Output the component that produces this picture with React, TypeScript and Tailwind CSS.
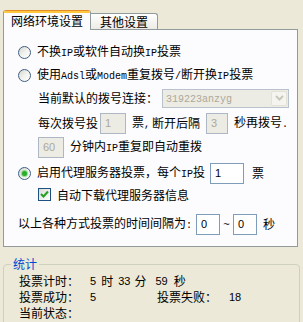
import React from "react";

const L = ({ children }: { children: React.ReactNode }) => (
  <span className="font-['Liberation_Mono',monospace] text-[10px]">{children}</span>
);

const Radio = ({ checked }: { checked?: boolean }) => (
  <span className="w-[13px] h-[13px] rounded-full border border-[#3D5F86] bg-gradient-to-br from-[#D6D5CE] via-[#F2F2EE] to-white flex items-center justify-center shrink-0">
    {checked && <span className="w-[5px] h-[5px] rounded-full bg-[#2AAE2A] shadow-[0_0_1px_1px_#8CD88C]" />}
  </span>
);

const Check = () => (
  <span className="w-[13px] h-[13px] border border-[#1C5180] bg-gradient-to-br from-[#DCDCD6] to-white flex items-center justify-center shrink-0">
    <svg width="9" height="9" viewBox="0 0 9 9">
      <path d="M1 4 L3.5 6.5 L8 1.5" stroke="#21A121" strokeWidth="2" fill="none" />
    </svg>
  </span>
);

const Box = ({ w, v, disabled }: { w: string; v: string; disabled?: boolean }) => (
  <div
    className={
      w +
      " h-[21px] border pl-[4px] pt-[2px] text-[11px] leading-[14px] font-['Liberation_Sans',sans-serif] shrink-0 " +
      (disabled
        ? "border-[#AEB8C4] bg-[#EDECE4] text-[#ACA899]"
        : "border-[#7F9DB9] bg-white text-black")
    }
  >
    {v}
  </div>
);

export default function App() {
  return (
    <div className="w-[303px] h-[322px] bg-[#ECE9D8] overflow-hidden font-['Noto_Sans_CJK_SC','Noto_Sans_CJK_SC',sans-serif] text-[12px] leading-[14px] text-black">
      {/* Tabs */}
      <div className="flex items-end h-[29px] pl-[3px]">
        <div className="relative z-10 -mb-px w-[88px] h-[20px] flex flex-col border-x border-[#919B9C] bg-[#FCFCFE] rounded-t-[3px] overflow-hidden">
          <div className="h-[1px] bg-[#E68B2C]" />
          <div className="h-[2px] bg-[#FFC73C]" />
          <div className="h-[15px] flex items-center justify-center">网络环境设置</div>
        </div>
        <div className="w-[67px] h-[16px] flex items-center justify-center pt-[1px] border-t border-r border-[#919B9C] rounded-tr-[3px] bg-gradient-to-b from-white to-[#ECEBE6]">
          其他设置
        </div>
      </div>

      {/* Panel */}
      <div className="ml-[3px] w-[295px] h-[218px] border border-[#919B9C] bg-[#FCFCFE] pt-[11px] pl-[14px] flex flex-col">
        <div className="h-[22px] flex items-center">
          <Radio />
          <span className="ml-[6px]">
            不换<L>IP</L>或软件自动换<L>IP</L>投票
          </span>
        </div>
        <div className="h-[24px] flex items-center">
          <Radio />
          <span className="ml-[6px]">
            使用<L>Adsl</L>或<L>Modem</L>重复拨号<L>/</L>断开换<L>IP</L>投票
          </span>
        </div>
        <div className="h-[22px] flex items-center pl-[20px]">
          <span className="w-[124px]">当前默认的拨号连接：</span>
          <div className="w-[127px] h-[19px] border border-[#B7C2CC] bg-[#EDECE4] flex items-center">
            <span className="flex-1 pl-[3px] text-[#ACA899]">
              <L>319223anzyg</L>
            </span>
            <span className="w-[16px] h-[15px] mr-[1px] rounded-[2px] border border-[#E4E2D8] bg-[#F5F4EF] flex items-center justify-center">
              <svg width="9" height="6" viewBox="0 0 9 6">
                <path d="M1 1 L4.5 4.5 L8 1" stroke="#C9C7BA" strokeWidth="2" fill="none" />
              </svg>
            </span>
          </div>
        </div>
        <div className="h-[28px] flex items-center pl-[20px]">
          <span className="w-[62px]">每次拨号投</span>
          <Box w="w-[26px]" v="1" disabled />
          <span className="ml-[6px]">
            票<L>,</L>
          </span>
          <span className="ml-[2px] w-[54px]">断开后隔</span>
          <Box w="w-[22px]" v="3" disabled />
          <span className="ml-[6px]">
            秒再拨号<L>.</L>
          </span>
        </div>
        <div className="h-[21px] flex items-center pl-[20px]">
          <Box w="w-[26px]" v="60" disabled />
          <span className="ml-[6px]">
            分钟内<L>IP</L>重复即自动重拨
          </span>
        </div>
        <div className="h-[30px] flex items-center">
          <Radio checked />
          <span className="ml-[6px] w-[173px]">
            启用代理服务器投票，每个<L>IP</L>投
          </span>
          <Box w="w-[34px]" v="1" />
          <span className="ml-[8px]">票</span>
        </div>
        <div className="h-[13px] flex items-center pl-[20px]">
          <Check />
          <span className="ml-[6px]">自动下载代理服务器信息</span>
        </div>
        <div className="mt-[12px] h-[22px] flex items-center">
          <span className="w-[178px]">
            以上各种方式投票的时间间隔为<L>:</L>
          </span>
          <Box w="w-[24px]" v="0" />
          <span className="w-[13px] text-center text-[11px] font-['Liberation_Sans',sans-serif]">~</span>
          <Box w="w-[24px]" v="0" />
          <span className="ml-[6px]">秒</span>
        </div>
      </div>

      {/* Stats group */}
      <div className="relative mt-[17px] ml-[3px] w-[297px] h-[80px] border border-[#D0D0BF] rounded-[4px] pt-[8px] pl-[15px]">
        <span className="absolute left-[7px] -top-[8px] px-[2px] bg-[#ECE9D8] text-[#0046D5]">统计</span>
        <div className="h-[16px] flex items-center">
          <span className="w-[71px]">投票计时：</span>
          <span className="font-['Liberation_Sans',sans-serif] text-[11px]">5</span>
          <span className="ml-[5px]">时</span>
          <span className="ml-[5px] font-['Liberation_Sans',sans-serif] text-[11px]">33</span>
          <span className="ml-[4px]">分</span>
          <span className="ml-[9px] font-['Liberation_Sans',sans-serif] text-[11px]">59</span>
          <span className="ml-[6px]">秒</span>
        </div>
        <div className="h-[16px] flex items-center">
          <span className="w-[71px]">投票成功：</span>
          <span className="w-[67px] font-['Liberation_Sans',sans-serif] text-[11px]">5</span>
          <span className="w-[72px]">投票失败：</span>
          <span className="font-['Liberation_Sans',sans-serif] text-[11px]">18</span>
        </div>
        <div className="h-[16px] flex items-center">
          <span>当前状态：</span>
        </div>
      </div>
    </div>
  );
}
